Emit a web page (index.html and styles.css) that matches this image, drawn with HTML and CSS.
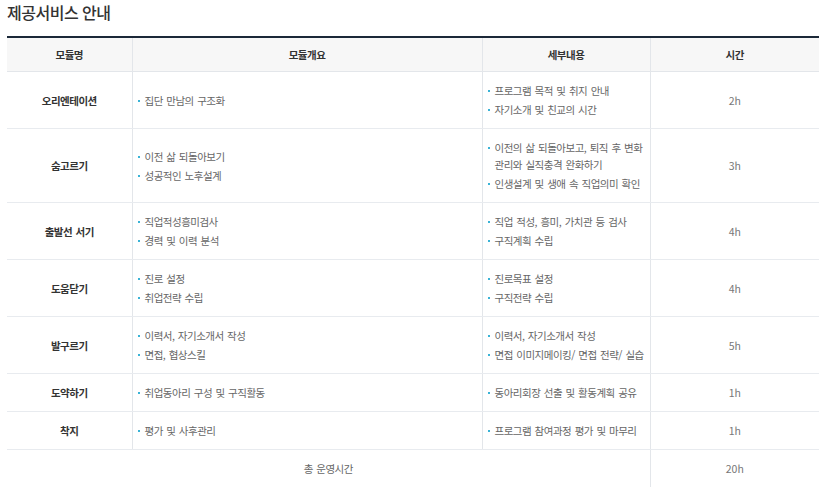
FILE: index.html
```html
<!DOCTYPE html>
<html lang="ko">
<head>
<meta charset="utf-8">
<title>제공서비스 안내</title>
<link rel="stylesheet" href="styles.css">
</head>
<body>
<div class="page">
  <h2 class="title">제공서비스 안내</h2>
  <table class="svc">
    <colgroup>
      <col class="c1"><col class="c2"><col class="c3"><col class="c4">
    </colgroup>
    <thead>
      <tr><th>모듈명</th><th>모듈개요</th><th>세부내용</th><th>시간</th></tr>
    </thead>
    <tbody>
      <tr>
        <td class="name">오리엔테이션</td>
        <td><ul class="dots"><li>집단 만남의 구조화</li></ul></td>
        <td><ul class="dots"><li>프로그램 목적 및 취지 안내</li><li>자기소개 및 친교의 시간</li></ul></td>
        <td class="time">2h</td>
      </tr>
      <tr>
        <td class="name">숨고르기</td>
        <td><ul class="dots"><li>이전 삶 되돌아보기</li><li>성공적인 노후설계</li></ul></td>
        <td><ul class="dots"><li>이전의 삶 되돌아보고, 퇴직 후 변화 관리와 실직충격 완화하기</li><li>인생설계 및 생애 속 직업의미 확인</li></ul></td>
        <td class="time">3h</td>
      </tr>
      <tr>
        <td class="name">출발선 서기</td>
        <td><ul class="dots"><li>직업적성흥미검사</li><li>경력 및 이력 분석</li></ul></td>
        <td><ul class="dots"><li>직업 적성, 흥미, 가치관 등 검사</li><li>구직계획 수립</li></ul></td>
        <td class="time">4h</td>
      </tr>
      <tr>
        <td class="name">도움닫기</td>
        <td><ul class="dots"><li>진로 설정</li><li>취업전략 수립</li></ul></td>
        <td><ul class="dots"><li>진로목표 설정</li><li>구직전략 수립</li></ul></td>
        <td class="time">4h</td>
      </tr>
      <tr>
        <td class="name">발구르기</td>
        <td><ul class="dots"><li>이력서, 자기소개서 작성</li><li>면접, 협상스킬</li></ul></td>
        <td><ul class="dots"><li>이력서, 자기소개서 작성</li><li>면접 이미지메이킹/ 면접 전략/ 실습</li></ul></td>
        <td class="time">5h</td>
      </tr>
      <tr>
        <td class="name">도약하기</td>
        <td><ul class="dots"><li>취업동아리 구성 및 구직활동</li></ul></td>
        <td><ul class="dots"><li>동아리회장 선출 및 활동계획 공유</li></ul></td>
        <td class="time">1h</td>
      </tr>
      <tr>
        <td class="name">착지</td>
        <td><ul class="dots"><li>평가 및 사후관리</li></ul></td>
        <td><ul class="dots"><li>프로그램 참여과정 평가 및 마무리</li></ul></td>
        <td class="time">1h</td>
      </tr>
      <tr class="total">
        <td colspan="3" class="total-label">총 운영시간</td>
        <td class="time">20h</td>
      </tr>
    </tbody>
  </table>
</div>
</body>
</html>
```
FILE: styles.css
```css
html, body {
  margin: 0;
  padding: 0;
  background: #fff;
}
body {
  font-family: "Noto Sans CJK KR", "Noto Sans", sans-serif;
  color: #666;
}
.page {
  padding: 0 7px;
}
.title {
  margin: 0 0 12px;
  height: 24px;
  font-size: 16px;
  line-height: 24px;
  font-weight: 500;
  letter-spacing: -0.5px;
  color: #333;
}
.svc {
  width: 812px;
  border-collapse: collapse;
  table-layout: fixed;
  border-top: 2px solid #1b2838;
  font-size: 10.5px;
  letter-spacing: -0.5px;
  word-spacing: 1px;
}
.c1 { width: 125px; }
.c2 { width: 350px; }
.c3 { width: 168px; }
.c4 { width: 169px; }
.svc th {
  height: 33px;
  padding: 0;
  background: #f7f7f7;
  color: #333;
  font-weight: 700;
  border-bottom: 1px solid #e3e6ea;
  border-left: 1px solid #e3e6ea;
  text-align: center;
  vertical-align: middle;
}
.svc th:first-child,
.svc td:first-child { border-left: 0; }
.svc td {
  padding: 10px 5px;
  border-bottom: 1px solid #e8ebef;
  border-left: 1px solid #e3e6ea;
  vertical-align: middle;
  line-height: 17px;
}
.svc td.name {
  text-align: center;
  font-weight: 700;
  color: #333;
}
.svc td.time {
  text-align: center;
  color: #777;
  letter-spacing: 0;
}
.dots {
  list-style: none;
  margin: 0;
  padding: 0;
}
.dots li {
  position: relative;
  padding-left: 7px;
}
.dots li + li { margin-top: 2px; }
.dots li::before {
  content: "";
  position: absolute;
  left: 0;
  top: 8px;
  width: 2px;
  height: 2px;
  background: #3ab3d6;
}
.total td { border-bottom: 0; }
.total-label {
  text-align: center;
  color: #666;
}
```
